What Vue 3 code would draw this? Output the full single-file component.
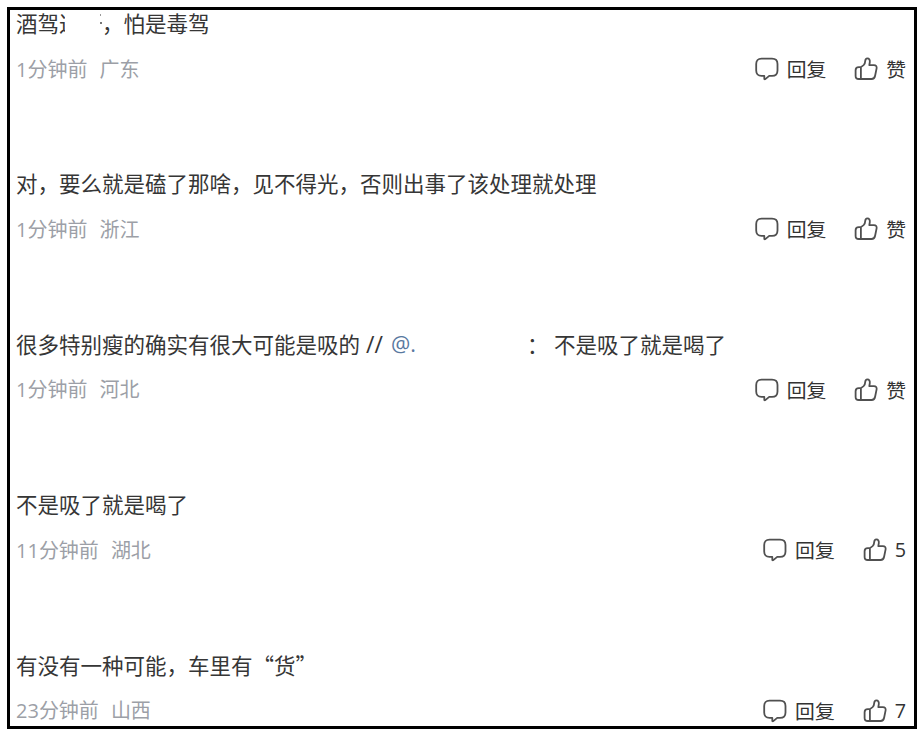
<template>
  <div class="page">
    <div class="comment-list">
      <div v-for="item in comments" :key="item.id" class="comment">
        <div class="comment-text">
          <template v-for="(part, i) in item.parts" :key="i">
            <span :class="part.type">{{ part.text }}</span>
          </template>
        </div>
        <div class="comment-footer">
          <div class="meta">
            <span class="time"><span class="latin">{{ item.minutes }}</span>分钟前</span>
            <span class="region">{{ item.region }}</span>
          </div>
          <div class="actions">
            <div class="action reply">
              <svg class="icon" viewBox="0 0 24 24">
                <path d="M6.500 1.700h10.500c3.500 0 5.500 2 5.500 5.300v6.500c0 3.400-2 5.400-5.500 5.400h-2.800l-3.900 3.200c-.5.4-1 .2-1-.4v-2.800H6.500c-3.500 0-5.300-2-5.300-5.400V7c0-3.300 1.800-5.300 5.300-5.300z" />
              </svg>
              <span class="action-label">回复</span>
            </div>
            <div class="action like">
              <svg class="icon" viewBox="0 0 24 24">
                <path d="M6.900 10.100l2.700-2c1.100-.9 1.500-2.200 1.600-4 .1-1.700.9-2.700 2.200-2.700 1.800 0 2.700 1.600 2.400 3.700l-.5 3h4.600c2.100 0 3.100 1.300 2.700 3.300l-1.500 7.400c-.4 2.200-1.500 3.200-3.500 3.200H4.800c-2.100 0-3.200-1.100-3.200-3.100v-5.700c0-2 1.100-3.100 3.200-3.100h2.100zM6.900 10.100v11.900" />
              </svg>
              <span class="action-label" :class="{ latin: item.likes }">{{ item.likes || '赞' }}</span>
            </div>
          </div>
        </div>
      </div>
    </div>
  </div>
</template>

<script setup>
const comments = [
  {
    id: 1,
    parts: [
      { type: 'plain', text: '酒驾' },
      { type: 'cut', text: '过' },
      { type: 'erased', text: '' },
      { type: 'plain', text: '，怕是毒驾' }
    ],
    minutes: 1,
    region: '广东',
    likes: 0
  },
  {
    id: 2,
    parts: [{ type: 'plain', text: '对，要么就是磕了那啥，见不得光，否则出事了该处理就处理' }],
    minutes: 1,
    region: '浙江',
    likes: 0
  },
  {
    id: 3,
    parts: [
      { type: 'plain', text: '很多特别瘦的确实有很大可能是吸的' },
      { type: 'slashes', text: '//' },
      { type: 'mention', text: '@.' },
      { type: 'colon', text: '：' },
      { type: 'plain', text: '不是吸了就是喝了' }
    ],
    minutes: 1,
    region: '河北',
    likes: 0
  },
  {
    id: 4,
    parts: [{ type: 'plain', text: '不是吸了就是喝了' }],
    minutes: 11,
    region: '湖北',
    likes: 5
  },
  {
    id: 5,
    parts: [{ type: 'plain', text: '有没有一种可能，车里有“货”' }],
    minutes: 23,
    region: '山西',
    likes: 7
  }
]
</script>

<style>
body {
  background: #fff;
}
</style>

<style scoped>
.page {
  box-sizing: border-box;
  width: 922px;
  height: 733px;
  padding: 7px 5px 4px 7px;
  overflow: hidden;
  font-family: 'Noto Sans CJK SC', 'Noto Sans', sans-serif;
}

.comment-list {
  box-sizing: border-box;
  height: 722px;
  border: 3px solid #000;
  overflow: hidden;
}

.comment {
  box-sizing: border-box;
  height: 160.4px;
  padding: 0 8px 0 6px;
}

.comment-text {
  display: flex;
  height: 29px;
  line-height: 26px;
  font-size: 21.5px;
  color: #363636;
  white-space: nowrap;
}

.cut {
  width: 6px;
  overflow: hidden;
}

/* two specks left at the right edge of the removed character */
.erased {
  width: 37px;
  background:
    linear-gradient(#999, #999) 35px 4px / 1px 2px no-repeat,
    linear-gradient(#777, #777) 35px 12px / 2px 2px no-repeat;
}

.slashes {
  width: 25px;
  margin-left: 6px;
  font-family: 'Open Sans', sans-serif;
  font-size: 23px;
}

.mention {
  width: 136px;
  font-family: 'Open Sans', sans-serif;
  color: #5878a0;
}

.colon {
  width: 27px;
}

.comment-footer {
  display: flex;
  justify-content: space-between;
  align-items: center;
  height: 30px;
  margin-top: 15px;
  font-size: 19.8px;
  line-height: 30px;
}

.meta {
  display: flex;
  gap: 12px;
  font-size: 20px;
  color: #9c9fa7;
}

.latin {
  font-family: 'Open Sans', sans-serif;
}

.actions {
  display: flex;
  gap: 28px;
  color: #333;
}

.action {
  display: flex;
  align-items: center;
  gap: 8px;
}

.icon {
  width: 24px;
  height: 24px;
  fill: none;
  stroke: #505050;
  stroke-width: 1.8;
  stroke-linejoin: round;
  stroke-linecap: round;
}
</style>
